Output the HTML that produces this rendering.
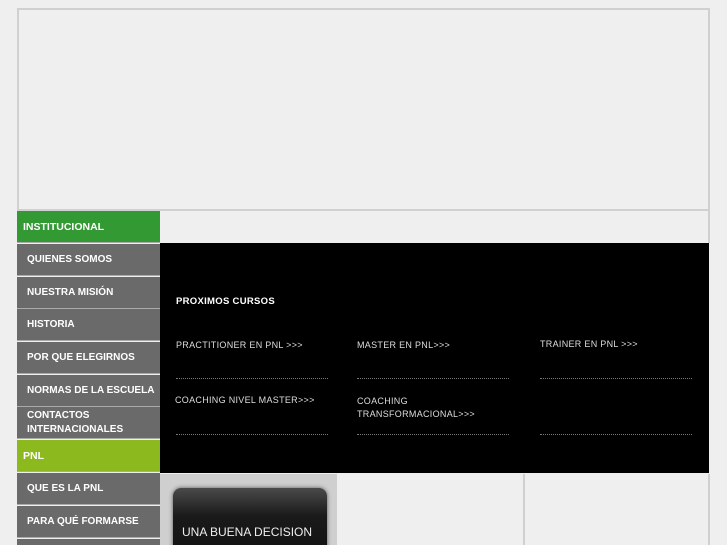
<!DOCTYPE html>
<html style="width:727px;height:545px;overflow:hidden"><head><meta charset="utf-8"><style>
*{margin:0;padding:0;box-sizing:border-box}
body{width:727px;height:545px;background:#efefef;position:relative;overflow:hidden;font-family:"Liberation Sans",sans-serif}
.a{position:absolute}
.hdr{left:17px;top:8px;width:693px;height:203px;border:2px solid #d0d0d0;background:#efefef}
.m{position:absolute;left:17px;width:143px;height:32px;background:#6a6a6a;color:#fff;font-weight:bold;font-size:10px;padding-left:10px;display:flex;align-items:center;border-bottom:1px solid #aaa}
.g{background:#339933;padding-left:6px;font-size:10.5px}
.l{background:#8cba1e;padding-left:6px;font-size:10.5px}
.blk{left:160px;top:243px;width:549px;height:230px;background:#000}
.t{position:absolute;color:#ddd;font-size:9px;letter-spacing:.3px}
.d{position:absolute;height:0;width:152px;border-top:1px dotted #777}
</style></head><body>
<div class="a hdr"></div>
<div class="a" style="left:160px;top:211px;width:550px;height:32px;border-right:2px solid #d0d0d0"></div>
<div class="m g" style="top:211px">INSTITUCIONAL</div>
<div class="m" style="top:244px">QUIENES SOMOS</div>
<div class="m" style="top:277px">NUESTRA MISIÓN</div>
<div class="m" style="top:309px">HISTORIA</div>
<div class="m" style="top:342px">POR QUE ELEGIRNOS</div>
<div class="m" style="top:375px">NORMAS DE LA ESCUELA</div>
<div class="m" style="top:407px;line-height:14px">CONTACTOS<br>INTERNACIONALES</div>
<div class="m l" style="top:440px">PNL</div>
<div class="m" style="top:473px">QUE ES LA PNL</div>
<div class="m" style="top:506px">PARA QUÉ FORMARSE</div>
<div class="m" style="top:539px"></div>
<div class="a blk"></div>
<div class="t" style="left:176px;top:296px;font-weight:bold;color:#fff;font-size:9.5px">PROXIMOS CURSOS</div>
<div class="t" style="left:176px;top:340px">PRACTITIONER EN PNL &gt;&gt;&gt;</div>
<div class="t" style="left:357px;top:340px">MASTER EN PNL&gt;&gt;&gt;</div>
<div class="t" style="left:540px;top:339px">TRAINER EN PNL &gt;&gt;&gt;</div>
<div class="d" style="left:176px;top:378px"></div>
<div class="d" style="left:357px;top:378px"></div>
<div class="d" style="left:540px;top:378px"></div>
<div class="t" style="left:175px;top:395px">COACHING NIVEL MASTER&gt;&gt;&gt;</div>
<div class="t" style="left:357px;top:395px;line-height:13px">COACHING<br>TRANSFORMACIONAL&gt;&gt;&gt;</div>
<div class="d" style="left:176px;top:434px"></div>
<div class="d" style="left:357px;top:434px"></div>
<div class="d" style="left:540px;top:434px"></div>
<div class="a" style="left:160px;top:474px;width:177px;height:71px;background:#cfcfcf"></div>
<div class="a" style="left:337px;top:474px;width:373px;height:71px;border-right:2px solid #d0d0d0"></div>
<div class="a" style="left:523px;top:474px;width:2px;height:71px;background:#d0d0d0"></div>
<div class="a" style="left:173px;top:488px;width:154px;height:70px;border-radius:8px;background:linear-gradient(#4a4a4a,#1a1a1a 40%,#111);box-shadow:0 0 4px #555;color:#eee;font-size:12px;padding:37px 0 0 9px">UNA BUENA DECISION</div>
</body></html>
